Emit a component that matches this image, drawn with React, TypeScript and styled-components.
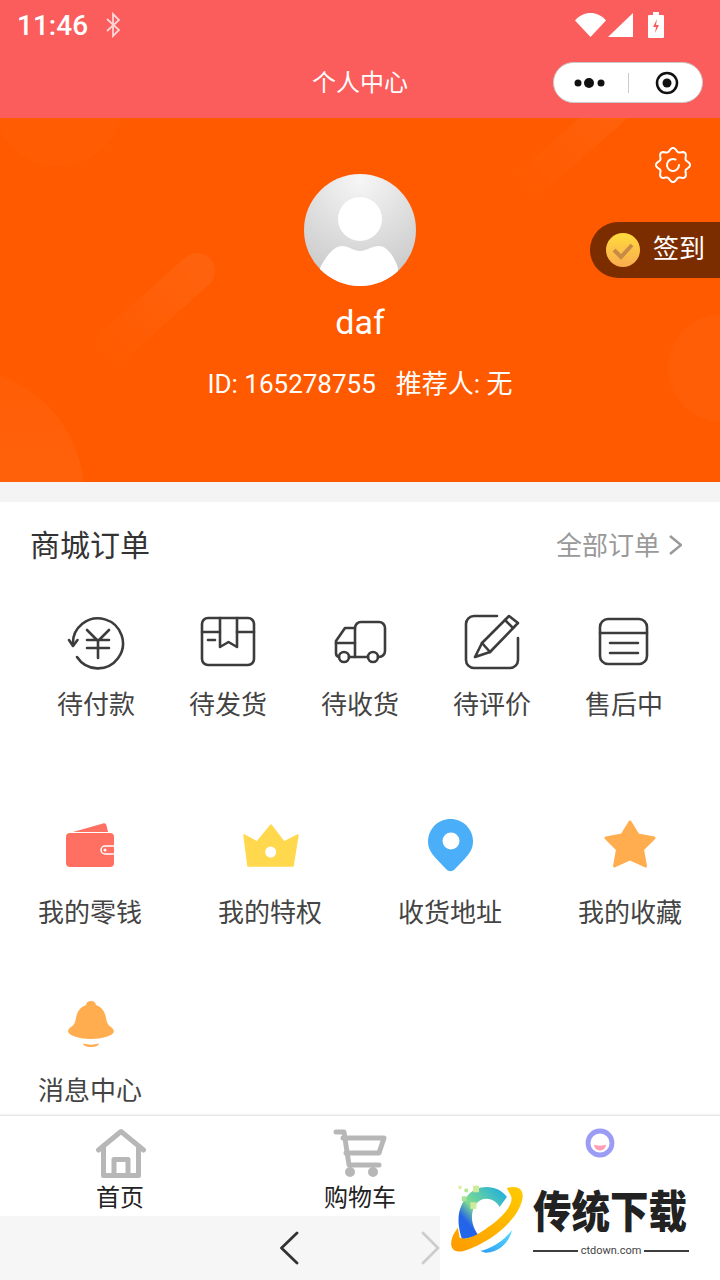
import styled, { createGlobalStyle } from "styled-components";

const GlobalStyle = createGlobalStyle`
  html, body {
    margin: 0;
    padding: 0;
    background: #fff;
  }
  * {
    box-sizing: border-box;
  }
`;

const FONT = `Roboto, "Noto Sans CJK SC", sans-serif`;

const Screen = styled.div`
  position: relative;
  display: flex;
  flex-direction: column;
  width: 720px;
  height: 1280px;
  overflow: hidden;
  background: #fff;
  font-family: ${FONT};
`;

const StatusBar = styled.div`
  display: flex;
  align-items: center;
  height: 47px;
  padding: 3px 56px 0 17px;
  background: #fb5d5d;
  color: #fff;
`;

const Clock = styled.span`
  font-size: 28px;
  font-weight: 500;
`;

const BluetoothIcon = styled.svg`
  margin-left: 18px;
`;

const StatusRight = styled.div`
  display: flex;
  align-items: center;
  gap: 2px;
  margin-left: auto;
`;

const BatteryIcon = styled.svg`
  margin-left: 13px;
`;

const NavBar = styled.div`
  display: grid;
  grid-template-columns: 1fr auto 1fr;
  align-items: center;
  height: 71px;
  padding: 0 17px;
  background: #fb5d5d;
`;

const NavTitle = styled.div`
  grid-column: 2;
  margin-bottom: 4px;
  color: #fff;
  font-size: 24px;
`;

const Capsule = styled.div`
  grid-column: 3;
  justify-self: end;
  display: flex;
  align-items: center;
  width: 150px;
  height: 41px;
  padding-left: 20px;
  border: 1px solid #c9c9c9;
  border-radius: 21px;
  background: #fff;
`;

const CapsuleDivider = styled.span`
  width: 1px;
  height: 20px;
  margin: 0 26px 0 22px;
  background: #ccc;
`;

const Hero = styled.section`
  position: relative;
  display: flex;
  flex-direction: column;
  align-items: center;
  height: 364px;
  padding-top: 56px;
  overflow: hidden;
  background: #ff5a00;
  color: #fff;
`;

const HeroArt = styled.svg`
  position: absolute;
  top: 0;
  left: 0;
`;

const Avatar = styled.svg`
  position: relative;
  display: block;
`;

const UserName = styled.div`
  position: relative;
  margin-top: 14px;
  font-size: 34px;
  line-height: 44px;
`;

const UserMeta = styled.div`
  position: relative;
  display: flex;
  gap: 20px;
  margin-top: 20px;
  font-size: 26px;
  line-height: 40px;
`;

const GearButton = styled.svg`
  position: absolute;
  top: 29px;
  right: 29px;
`;

const SignIn = styled.div`
  position: absolute;
  top: 104px;
  right: 0;
  display: flex;
  align-items: center;
  gap: 13px;
  width: 130px;
  height: 56px;
  padding-left: 16px;
  border-radius: 28px 0 0 28px;
  background: #7c2d00;
  font-size: 26px;
`;

const SignInText = styled.span`
  margin-bottom: 8px;
`;

const Spacer = styled.div`
  height: 20px;
  background: #f4f4f4;
`;

const Content = styled.main`
  flex: 1;
  min-height: 0;
  overflow: hidden;
`;

const SectionHeader = styled.div`
  display: flex;
  align-items: center;
  justify-content: space-between;
  height: 86px;
  padding: 0 38px 0 30px;
`;

const SectionTitle = styled.h2`
  margin: 0 0 4px;
  color: #333;
  font-size: 30px;
  font-weight: 400;
`;

const SectionLink = styled.div`
  display: flex;
  align-items: center;
  gap: 8px;
  color: #999;
  font-size: 26px;
`;

const SectionLinkText = styled.span`
  margin-bottom: 4px;
`;

const OrderGrid = styled.div`
  display: grid;
  grid-template-columns: repeat(5, 132px);
  padding: 24px 30px 0;
`;

const ToolGrid = styled.div`
  display: grid;
  grid-template-columns: repeat(4, 180px);
  row-gap: 63px;
  margin-top: 93px;
`;

const GridItem = styled.div`
  display: flex;
  flex-direction: column;
  align-items: center;
`;

const ItemLabel = styled.span<{ $gap: number }>`
  margin-top: ${(props) => props.$gap}px;
  color: #444;
  font-size: 26px;
  line-height: 36px;
`;

const TabBar = styled.nav`
  display: grid;
  grid-template-columns: repeat(3, 240px);
  height: 101px;
  padding-top: 10px;
  border-top: 1px solid #e6e6e6;
  box-shadow: 0 -1px 2px rgba(0, 0, 0, 0.06);
  background: #fff;
`;

const TabItem = styled.div`
  display: flex;
  flex-direction: column;
  align-items: center;
`;

const TabLabel = styled.span`
  margin-top: 1px;
  color: #222;
  font-size: 24px;
  line-height: 34px;
`;

const SystemBar = styled.div`
  display: flex;
  align-items: center;
  justify-content: center;
  gap: 121px;
  height: 64px;
  background: #f6f6f6;
`;

const Watermark = styled.div`
  position: absolute;
  right: 0;
  bottom: 0;
  display: flex;
  align-items: flex-start;
  gap: 6px;
  width: 280px;
  height: 100px;
  padding: 3px 0 0 7px;
  background: #fff;
`;

const WatermarkText = styled.div`
  display: flex;
  flex-direction: column;
  width: 156px;
  margin-top: 3px;
`;

const WatermarkTitle = styled.div`
  color: #222;
  font-family: "Noto Sans CJK SC", sans-serif;
  font-size: 38.5px;
  font-weight: 900;
  line-height: 52px;
  white-space: nowrap;
  transform: scaleY(1.15);
  transform-origin: 50% 90%;
`;

const WatermarkSite = styled.div`
  display: flex;
  align-items: center;
  gap: 3px;
  margin-top: 6px;
  color: #444;
  font-size: 11px;
  line-height: 14px;
`;

const WatermarkRule = styled.span`
  flex: 1;
  height: 2.5px;
  background: #3d3d3d;
`;

const gearPath = (() => {
  const points: string[] = [];
  for (let i = 0; i < 96; i++) {
    const angle = (i / 96) * Math.PI * 2;
    const radius = 15.4 + 1.7 * Math.cos(angle * 8);
    points.push(`${(18 + radius * Math.sin(angle)).toFixed(2)} ${(18 - radius * Math.cos(angle)).toFixed(2)}`);
  }
  return `M${points.join("L")}Z`;
})();

const Icon = ({ children }: { children: React.ReactNode }) => (
  <svg
    width="60"
    height="60"
    viewBox="0 0 60 60"
    fill="none"
    stroke="#3c3c3c"
    strokeWidth="2.6"
    strokeLinecap="round"
    strokeLinejoin="round"
  >
    {children}
  </svg>
);

const orders = [
  {
    label: "待付款",
    icon: (
      <>
        <path d="M7 33A25 25 0 1 1 11 45" />
        <path d="M3 28l4 6 4.500-6" />
        <path d="M21 18l11 11 11-11M21 28h22M21 36h22M32 29v17" />
      </>
    ),
  },
  {
    label: "待发货",
    icon: (
      <>
        <rect x="4" y="6" width="52" height="47" rx="6" />
        <path d="M4 20h18M39 20h17" />
        <path d="M22 6v29l8.500-5 8.500 5V6" />
        <path d="M10 28h7" />
      </>
    ),
  },
  {
    label: "待收货",
    icon: (
      <>
        <path d="M25 45V16a6 6 0 0 1 6-6h18a6 6 0 0 1 6 6v23a6 6 0 0 1-6 6h-1" />
        <path d="M25 16H15L6 29v12a4 4 0 0 0 3 4" />
        <path d="M6 31h19M19 45h19" />
        <circle cx="14" cy="45" r="5" />
        <circle cx="43" cy="45" r="5" />
      </>
    ),
  },
  {
    label: "待评价",
    icon: (
      <>
        <path d="M35 4H12a8 8 0 0 0-8 8v36a8 8 0 0 0 8 8h36a8 8 0 0 0 8-8V26" />
        <path d="M13 45l7-14 27-27 9 7-28 29z" />
        <path d="M20 31l8 9M43 8l8 8" />
      </>
    ),
  },
  {
    label: "售后中",
    icon: (
      <>
        <rect x="6" y="7" width="47" height="45" rx="8" />
        <path d="M6 21h47M16 31h28M16 41h28" />
      </>
    ),
  },
];

const tools = [
  {
    label: "我的零钱",
    icon: (
      <svg width="60" height="60" viewBox="0 0 60 60">
        <path d="M13 16L43 7.500c2-.5 3 .5 3.500 2L48 16z" fill="#ff7062" />
        <rect x="6" y="17" width="48" height="34" rx="4" fill="#ff7062" />
        <rect x="41" y="30" width="16" height="8" rx="4" fill="#ff7062" stroke="#fff" strokeWidth="1.500" />
        <circle cx="45" cy="34" r="1.500" fill="#fff" />
        <rect x="54" y="28" width="6" height="12" fill="#fff" />
      </svg>
    ),
  },
  {
    label: "我的特权",
    icon: (
      <svg width="60" height="60" viewBox="0 0 60 60">
        <path
          d="M4 19l13 7L31 9l13 17 14-7-5 31H8z"
          fill="#ffd84d"
          stroke="#ffd84d"
          strokeWidth="1.500"
          strokeLinejoin="round"
        />
        <circle cx="30.700" cy="36" r="5.500" fill="#fff" />
      </svg>
    ),
  },
  {
    label: "收货地址",
    icon: (
      <svg width="60" height="60" viewBox="0 0 60 60">
        <path
          d="M30.500 3C18 3 8 13 8 25.500c0 7 3.500 12 8 17l10.500 11c2.300 2.300 5.700 2.300 8 0l10.500-11c4.500-5 8-10 8-17C53 13 43 3 30.500 3z"
          fill="#4aaef9"
        />
        <circle cx="31" cy="25" r="8.500" fill="#fff" />
      </svg>
    ),
  },
  {
    label: "我的收藏",
    icon: (
      <svg width="60" height="60" viewBox="0 0 60 60">
        <path
          d="M30 6l8 13 16 3-11.500 11.500 3 16.500L30 43l-15.500 7 3-16.500L6 22l16-3z"
          fill="#ffad4e"
          stroke="#ffad4e"
          strokeWidth="3"
          strokeLinejoin="round"
        />
      </svg>
    ),
  },
  {
    label: "消息中心",
    icon: (
      <svg width="60" height="60" viewBox="0 0 60 60">
        <path
          d="M31 7c-3 0-4.500 1.500-5 4-6 2-9 7-10 13-.7 4.500-2 7-5 9-2.500 1.500-3.500 3.500-2.500 5.500C10 42 20 45 31 45s21-3 22.500-6.500c1-2-.5-4-2.500-5.500-3-2-4.300-4.500-5-9-1-6-4-11-10-13-.5-2.500-2-4-5-4z"
          fill="#ffad4e"
        />
        <path d="M23 49.500c5 1.500 11 1.500 16 0-.5 2-3 3.500-8 3.500s-7.500-1.500-8-3.500z" fill="#ffad4e" />
      </svg>
    ),
  },
];

export default function App() {
  return (
    <Screen>
      <GlobalStyle />
      <StatusBar>
        <Clock>11:46</Clock>
        <BluetoothIcon width="14" height="26" viewBox="0 0 14 26" fill="none" stroke="#fff" strokeOpacity="0.75" strokeWidth="1.800">
          <path d="M1 7l12 11-6 6V2l6 6L1 19" />
        </BluetoothIcon>
        <StatusRight>
          <svg width="31" height="24" viewBox="0 0 31 24">
            <path d="M0 7.500C4 2.500 10 0 15.500 0S27 2.500 31 7.500L15.500 24z" fill="#fff" />
          </svg>
          <svg width="25" height="24" viewBox="0 0 25 24">
            <path d="M25 0v24H0z" fill="#fff" />
          </svg>
          <BatteryIcon width="16" height="26" viewBox="0 0 16 26">
            <path d="M5 0h6v3h4a1 1 0 0 1 1 1v21a1 1 0 0 1-1 1H1a1 1 0 0 1-1-1V4a1 1 0 0 1 1-1h4z" fill="#fff" />
            <path d="M9 7L5 15h3l-1 6 4-8H8z" fill="#fb5d5d" />
          </BatteryIcon>
        </StatusRight>
      </StatusBar>
      <NavBar>
        <NavTitle>个人中心</NavTitle>
        <Capsule>
          <svg width="32" height="14" viewBox="0 0 32 14" fill="#111">
            <circle cx="4" cy="7" r="3.500" />
            <circle cx="15" cy="7" r="5" />
            <circle cx="27" cy="7" r="3.500" />
          </svg>
          <CapsuleDivider />
          <svg width="24" height="24" viewBox="0 0 24 24">
            <circle cx="12" cy="12" r="10" fill="none" stroke="#111" strokeWidth="2.500" />
            <circle cx="12" cy="12" r="4.500" fill="#111" />
          </svg>
        </Capsule>
      </NavBar>
      <Hero>
        <HeroArt width="720" height="364" viewBox="0 0 720 364" fill="none">
          <defs>
            <linearGradient id="pillA" gradientUnits="userSpaceOnUse" x1="197" y1="153" x2="100" y2="240">
              <stop offset="0" stopColor="#fff" stopOpacity="0.05" />
              <stop offset="1" stopColor="#fff" stopOpacity="0" />
            </linearGradient>
            <linearGradient id="pillB" gradientUnits="userSpaceOnUse" x1="615" y1="0" x2="518" y2="75">
              <stop offset="0" stopColor="#fff" stopOpacity="0.04" />
              <stop offset="1" stopColor="#fff" stopOpacity="0" />
            </linearGradient>
            <linearGradient id="blobA" x1="0" y1="1" x2="0" y2="0">
              <stop offset="0" stopColor="#fff" stopOpacity="0.075" />
              <stop offset="1" stopColor="#fff" stopOpacity="0.02" />
            </linearGradient>
          </defs>
          <circle cx="58" cy="-18" r="66" fill="#fff" fillOpacity="0.014" />
          <circle cx="-42" cy="376" r="126" fill="url(#blobA)" />
          <circle cx="722" cy="250" r="54" fill="#fff" fillOpacity="0.024" />
          <path d="M197 153L100 240" stroke="url(#pillA)" strokeWidth="36" strokeLinecap="round" />
          <path d="M615 -10L518 75" stroke="url(#pillB)" strokeWidth="32" strokeLinecap="round" />
        </HeroArt>
        <GearButton width="36" height="36" viewBox="0 0 36 36" fill="none" stroke="#fff" strokeWidth="2">
          <path d={gearPath} />
          <path d="M20.500 12.500a6 6 0 1 0 3.500 5.500" strokeLinecap="round" />
        </GearButton>
        <Avatar width="112" height="112" viewBox="0 0 112 112">
          <defs>
            <radialGradient id="avatarBg" cx="0.5" cy="0.05" r="0.95">
              <stop offset="0" stopColor="#f6f6f6" />
              <stop offset="1" stopColor="#c8c8c8" />
            </radialGradient>
            <clipPath id="avatarClip">
              <circle cx="56" cy="56" r="56" />
            </clipPath>
          </defs>
          <circle cx="56" cy="56" r="56" fill="url(#avatarBg)" />
          <circle cx="56" cy="45" r="22" fill="#fff" />
          <path
            d="M16 94C22 82 30 72 38 72c6 0 12 5 18 5s12-5 19-5c8 0 15 10 19 22v18H16z"
            fill="#fff"
            clipPath="url(#avatarClip)"
          />
        </Avatar>
        <UserName>daf</UserName>
        <UserMeta>
          <span>ID: 165278755</span>
          <span>推荐人: 无</span>
        </UserMeta>
        <SignIn>
          <svg width="34" height="36" viewBox="0 0 34 36">
            <defs>
              <linearGradient id="signBg" x1="0" y1="0" x2="0" y2="1">
                <stop offset="0" stopColor="#ffdc3c" />
                <stop offset="1" stopColor="#f9ab50" />
              </linearGradient>
            </defs>
            <circle cx="17" cy="18" r="17" fill="url(#signBg)" />
            <path d="M8 18l7 7 11-12" fill="none" stroke="#c98a45" strokeWidth="4" />
          </svg>
          <SignInText>签到</SignInText>
        </SignIn>
      </Hero>
      <Spacer />
      <Content>
        <SectionHeader>
          <SectionTitle>商城订单</SectionTitle>
          <SectionLink>
            <SectionLinkText>全部订单</SectionLinkText>
            <svg width="14" height="22" viewBox="0 0 14 22" fill="none" stroke="#999" strokeWidth="2.500">
              <path d="M2 2l11 9-11 9" />
            </svg>
          </SectionLink>
        </SectionHeader>
        <OrderGrid>
          {orders.map((item) => (
            <GridItem key={item.label}>
              <Icon>{item.icon}</Icon>
              <ItemLabel $gap={15}>{item.label}</ItemLabel>
            </GridItem>
          ))}
        </OrderGrid>
        <ToolGrid>
          {tools.map((item) => (
            <GridItem key={item.label}>
              {item.icon}
              <ItemLabel $gap={19}>{item.label}</ItemLabel>
            </GridItem>
          ))}
        </ToolGrid>
      </Content>
      <TabBar>
        <TabItem>
          <svg width="54" height="54" viewBox="-1 0 54 54" fill="none" stroke="#b7b7b7" strokeWidth="5" strokeLinejoin="round">
            <path d="M4.500 24L27 5.500 49.500 24" strokeLinecap="round" />
            <path d="M9.500 21v28.500h35V21" />
            <path d="M20 49V33.500h14V49" />
          </svg>
          <TabLabel>首页</TabLabel>
        </TabItem>
        <TabItem>
          <svg width="54" height="54" viewBox="0 0 54 54" fill="none" stroke="#b7b7b7" strokeWidth="5" strokeLinecap="round" strokeLinejoin="round">
            <path d="M3 6h8l5 33h30" />
            <path d="M10 12h41l-5 15H13" />
            <circle cx="17" cy="46" r="2.500" fill="#b7b7b7" />
            <circle cx="40" cy="46" r="2.500" fill="#b7b7b7" />
          </svg>
          <TabLabel>购物车</TabLabel>
        </TabItem>
        <TabItem>
          <svg width="54" height="54" viewBox="0 0 54 54">
            <circle cx="27" cy="17" r="12" fill="none" stroke="#9b9cf5" strokeWidth="4.800" />
            <path d="M21 18.500c2 1.500 10 1.500 12 0a6 6 0 0 1-12 0z" fill="#ff9eb5" />
          </svg>
        </TabItem>
      </TabBar>
      <SystemBar>
        <svg width="20" height="34" viewBox="0 0 20 34" fill="none" stroke="#333" strokeWidth="2.800" strokeLinecap="round" strokeLinejoin="round">
          <path d="M17 2L1.500 17 17 32" />
        </svg>
        <svg width="20" height="34" viewBox="0 0 20 34" fill="none" stroke="#ccc" strokeWidth="2.800" strokeLinecap="round" strokeLinejoin="round">
          <path d="M2 2l15 15L2 32" />
        </svg>
      </SystemBar>
      <Watermark>
        <svg width="80" height="73" viewBox="80 220 240 220">
          <defs>
            <linearGradient id="wmTeal" x1="1" y1="0" x2="0" y2="1">
              <stop offset="0" stopColor="#14a9e6" />
              <stop offset="0.55" stopColor="#7fdc8f" />
              <stop offset="0.75" stopColor="#2563e8" />
              <stop offset="1" stopColor="#1f6af0" />
            </linearGradient>
            <linearGradient id="wmRing" x1="0" y1="1" x2="1" y2="0">
              <stop offset="0" stopColor="#ff9a00" />
              <stop offset="1" stopColor="#ffcb00" />
            </linearGradient>
            <linearGradient id="wmCyan" x1="0" y1="1" x2="1" y2="0">
              <stop offset="0" stopColor="#2f9cf5" />
              <stop offset="1" stopColor="#55dcfb" />
            </linearGradient>
          </defs>
          <path d="M260 262C235 225 170 220 140 260c-25 30-35 70-15 130l50-12c-30-38-25-88 5-106 20-10 45-2 58 20z" fill="url(#wmTeal)" />
          <path d="M260 235c35-10 55 5 45 40-15 55-85 120-175 150-30 7-45-10-35-40 3-10 10-20 17-30l6 30c27 10 62-15 97-40 40-30 70-70 55-90z" fill="url(#wmRing)" />
          <path d="M180 425c40-10 75-35 95-63-5 33-40 70-80 68z" fill="url(#wmCyan)" />
          <rect x="158" y="228" width="18" height="20" fill="#cdeb9b" />
          <rect x="150" y="278" width="18" height="20" fill="#cdeb9b" />
          <rect x="124" y="260" width="14" height="15" fill="#a8e29b" />
          <rect x="132" y="237" width="11" height="11" fill="#b6e88f" />
          <rect x="114" y="228" width="9" height="10" fill="#dff09a" />
        </svg>
        <WatermarkText>
          <WatermarkTitle>传统下载</WatermarkTitle>
          <WatermarkSite>
            <WatermarkRule />
            ctdown.com
            <WatermarkRule />
          </WatermarkSite>
        </WatermarkText>
      </Watermark>
    </Screen>
  );
}
